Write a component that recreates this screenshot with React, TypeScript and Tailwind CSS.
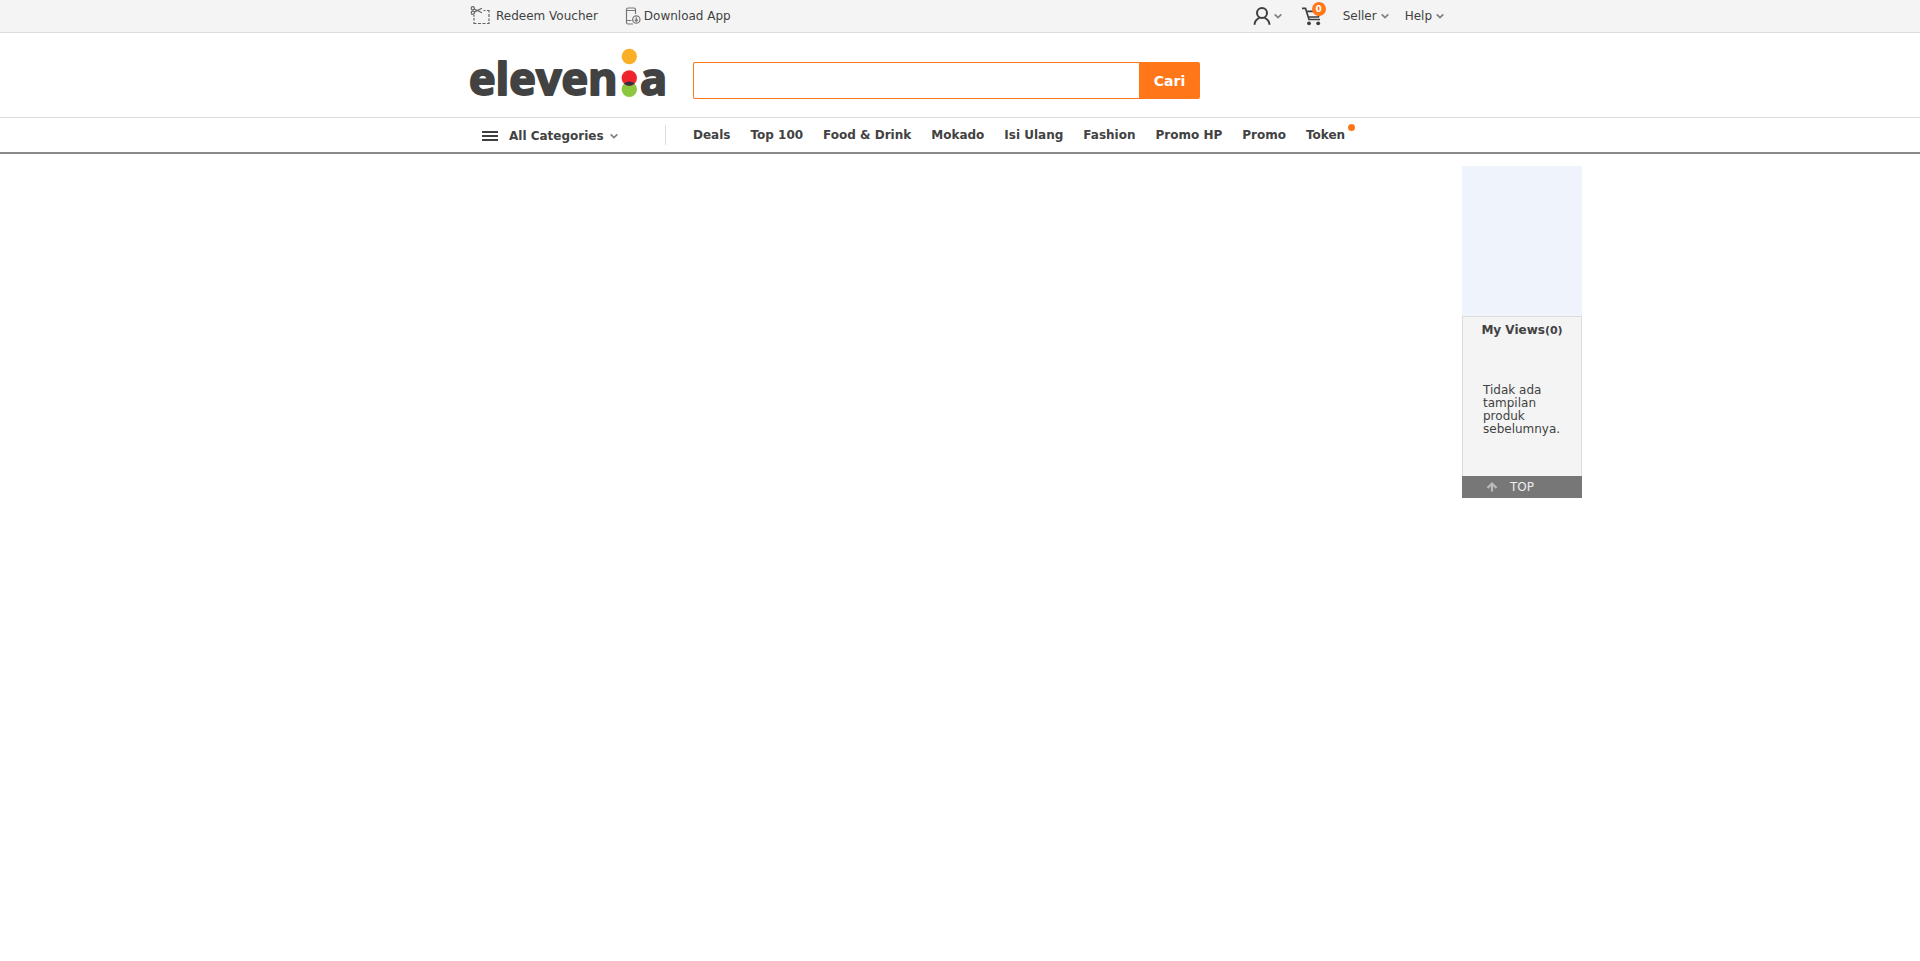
import React from "react";

const NAV = ["Deals", "Top 100", "Food & Drink", "Mokado", "Isi Ulang", "Fashion", "Promo HP", "Promo"];

function Chevron() {
  return (
    <svg className="size-2" viewBox="0 0 8 8" fill="none" stroke="#808080" strokeWidth="1.7" aria-hidden="true">
      <path d="M.7 2.3 4 5.600 7.300 2.300" />
    </svg>
  );
}

function VoucherIcon() {
  return (
    <svg className="h-5 w-5" viewBox="0 0 20 20" fill="none" stroke="#666" strokeWidth="1.2" aria-hidden="true">
      <circle cx="2.800" cy="2.300" r="1.600" />
      <circle cx="2.800" cy="6.800" r="1.600" />
      <path d="M4.200 3 12 6.800M4.200 6.100 12 2.200" />
      <path d="M13.500 4.500h2M17 4.500h2v2M19 8v3M19 12.500v2.500M19 16v1.500h-2M15.500 17.500h-3M11 17.500h-3M6.500 17.500H4v-1.500M4 14.500v-2.500M4 10.800v-1.800" />
    </svg>
  );
}

function AppIcon() {
  return (
    <svg className="h-5 w-4" viewBox="0 0 16 20" fill="none" stroke="#777" strokeWidth="1.2" aria-hidden="true">
      <path d="M10.500 8V3.500a1.500 1.500 0 0 0-1.500-1.500H3A1.500 1.500 0 0 0 1.500 3.500v13A1.500 1.500 0 0 0 3 18h5" />
      <path d="M1.500 4.500h9M1.500 14.500h5" />
      <circle cx="11.300" cy="13.500" r="3.700" />
      <path d="M11.300 11.300v4M9.600 13.600 11.300 15.300l1.700-1.700" />
    </svg>
  );
}

function UserIcon() {
  return (
    <svg className="h-5 w-[18px]" viewBox="0 0 18 20" fill="none" stroke="#3e3e3e" strokeWidth="2" aria-hidden="true">
      <circle cx="9" cy="7" r="5" />
      <path d="M1.500 18.800c0-4 2.200-5.800 5-7M16.500 18.800c0-4-2.200-5.800-5-7" />
    </svg>
  );
}

function CartIcon() {
  return (
    <svg className="h-5 w-5" viewBox="0 0 20 20" fill="none" stroke="#3e3e3e" strokeWidth="1.700" aria-hidden="true">
      <path d="M0 2.300h3.500L7 13.500h11M4.500 5.300h14l-2.200 5.700H6" />
      <circle cx="7" cy="17.300" r="1.900" fill="#3e3e3e" stroke="none" />
      <circle cx="16.200" cy="17.300" r="1.900" fill="#3e3e3e" stroke="none" />
    </svg>
  );
}

function Logo() {
  return (
    <svg className="h-16 w-[200px] overflow-visible" viewBox="0 0 200 64" role="img" aria-label="elevenia">
      <g fill="#424242" stroke="#424242" strokeWidth="2" strokeLinejoin="round" fontFamily="Open Sans, sans-serif" fontWeight="700" fontSize="45">
        <text x="-1" y="47">eleven</text>
        <text x="170" y="47">a</text>
      </g>
      <circle cx="159.300" cy="8.500" r="7.700" fill="#fbae27" />
      <circle cx="159.300" cy="41.200" r="7.700" fill="#8dc63f" />
      <circle cx="159.300" cy="30" r="7.700" fill="#ef252d" />
      <path d="M154 35.500Q159.300 31.500 164.600 35.500Q159.300 40 154 35.500Z" fill="#2f3043" />
    </svg>
  );
}

export default function App() {
  return (
    <div className="font-['DejaVu_Sans',sans-serif] text-[12px] leading-4 text-[#424242]">
      <header>
        <div className="border-b border-[#dcdcdc] bg-[#f4f4f4]">
          <div className="mx-auto flex h-8 max-w-[980px] items-center justify-between">
            <div className="flex items-center gap-[27px]">
              <a href="#voucher" className="flex items-center gap-1.5"><VoucherIcon />Redeem Voucher</a>
              <a href="#app" className="flex items-center gap-[3px]"><AppIcon />Download App</a>
            </div>
            <div className="flex items-center">
              <button aria-label="Account" className="mr-5 flex items-center gap-[3px]"><UserIcon /><Chevron /></button>
              <a href="#cart" aria-label="Cart" className="relative mr-[21px] block">
                <CartIcon />
                <span className="absolute -top-1 left-2.5 flex size-3.5 items-center justify-center rounded-full bg-[#ff7718] text-[9px] font-bold text-white">0</span>
              </a>
              <button className="mr-4 flex items-center gap-1">Seller<Chevron /></button>
              <button className="mr-1.5 flex items-center gap-1">Help<Chevron /></button>
            </div>
          </div>
        </div>
        <div className="mx-auto flex h-[84px] max-w-[980px] items-start pt-[15px]">
          <a href="#home"><Logo /></a>
          <form className="mt-3.5 ml-[23px] flex h-[37px] w-[507px]">
            <input type="search" aria-label="Search" className="min-w-0 flex-1 rounded-l-xs border border-r-0 border-[#ff7718] bg-white px-3 outline-none" />
            <button type="button" className="w-[61px] rounded-r-xs bg-[#ff7718] text-[14px] font-bold text-white">Cari</button>
          </form>
        </div>
        <nav className="border-t border-b-2 border-t-[#dcdcdc] border-b-[#8a8a8a] font-bold">
          <div className="mx-auto flex h-[34px] max-w-[980px] items-center">
            <button className="flex w-[195px] items-center pt-0.5 pl-3 font-bold">
              <svg className="mr-[11px] h-3 w-4" viewBox="0 0 16 12" fill="#3e3e3e" aria-hidden="true"><path d="M0 1h16v2H0zM0 5h16v2H0zM0 9h16v2H0z" /></svg>
              <span className="mr-1.5">All Categories</span>
              <Chevron />
            </button>
            <div className="h-5 w-px bg-[#dcdcdc]" />
            <ul className="ml-[27px] flex gap-5">
              {NAV.map((n) => <li key={n}><a href="#nav">{n}</a></li>)}
              <li className="relative"><a href="#token">Token</a><span className="absolute -top-[3px] -right-2.5 size-[7px] rounded-full bg-[#ff7718]" /></li>
            </ul>
          </div>
        </nav>
      </header>
      <div className="grid grid-cols-[1fr_980px_1fr]">
        <main />
        <div />
        <aside className="mt-3 ml-3 w-[120px]">
          <div className="h-[150px] bg-[#eef3fc]" />
          <div className="h-40 border border-b-0 border-[#dcdcdc] bg-[#f4f4f4]">
            <h2 className="pt-[5px] text-center font-bold">My Views<span className="text-[11px]">(0)</span></h2>
            <p className="mt-[45px] px-5 leading-[13px]">Tidak ada tampilan produk sebelumnya.</p>
          </div>
          <button className="flex h-[22px] w-full items-center bg-[#777] pl-6 text-[#eee]">
            <svg className="mr-3 h-3 w-3" viewBox="0 0 12 12" fill="none" stroke="#bbb" strokeWidth="2.200" aria-hidden="true"><path d="M6 10.500V3M1.500 7 6 2.500 10.500 7" /></svg>
            TOP
          </button>
        </aside>
      </div>
    </div>
  );
}
